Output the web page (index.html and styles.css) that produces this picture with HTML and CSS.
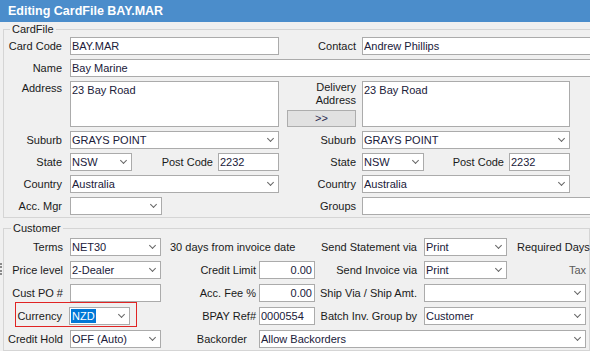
FILE: index.html
```html
<html>
    <head>
        <title>Editing CardFile BAY.MAR</title>
        <link rel="stylesheet" href="styles.css">
    </head>
    <body>
        <div class="titlebar">Editing CardFile BAY.MAR</div>

        <!-- card file details -->
        <fieldset class="group cardfile">
            <legend>CardFile</legend>
            <div class="card_grid">
                <label class="lbl">Card Code</label>
                <input class="box" type="text" value="BAY.MAR">
                <label class="lbl mid">Contact</label>
                <input class="box to_end" type="text" value="Andrew Phillips">

                <label class="lbl">Name</label>
                <input class="box wide" type="text" value="Bay Marine">

                <label class="lbl top">Address</label>
                <textarea class="box area">23 Bay Road</textarea>
                <div class="copy_cell">
                    <span class="two_line">Delivery<br>Address</span>
                    <button class="copy_btn">&gt;&gt;</button>
                </div>
                <textarea class="box area">23 Bay Road</textarea>
                <div></div>

                <label class="lbl">Suburb</label>
                <div class="combo"><span>GRAYS POINT</span></div>
                <label class="lbl mid">Suburb</label>
                <div class="combo"><span>GRAYS POINT</span></div>
                <div></div>

                <label class="lbl">State</label>
                <div class="pair">
                    <div class="combo state"><span>NSW</span></div>
                    <label class="pair_lbl">Post Code</label>
                    <input class="box post" type="text" value="2232">
                </div>
                <label class="lbl mid">State</label>
                <div class="pair">
                    <div class="combo state"><span>NSW</span></div>
                    <label class="pair_lbl">Post Code</label>
                    <input class="box post" type="text" value="2232">
                </div>
                <div></div>

                <label class="lbl">Country</label>
                <div class="combo"><span>Australia</span></div>
                <label class="lbl mid">Country</label>
                <div class="combo"><span>Australia</span></div>
                <div></div>

                <label class="lbl">Acc. Mgr</label>
                <div class="combo short"><span></span></div>
                <label class="lbl mid">Groups</label>
                <input class="box to_end" type="text" value="">
            </div>
        </fieldset>

        <!-- customer details -->
        <div class="customer_wrap">
            <div class="grip"></div>
            <fieldset class="group customer">
                <legend>Customer</legend>
                <div class="cust_grid">
                    <label class="lbl">Terms</label>
                    <div class="combo"><span>NET30</span></div>
                    <span class="note">30 days from invoice date</span>
                    <label class="lbl via">Send Statement via</label>
                    <div class="combo"><span>Print</span></div>
                    <span class="extra">Required Days</span>

                    <label class="lbl">Price level</label>
                    <div class="combo"><span>2-Dealer</span></div>
                    <label class="lbl money_lbl">Credit Limit</label>
                    <input class="box num" type="text" value="0.00">
                    <label class="lbl via">Send Invoice via</label>
                    <div class="combo"><span>Print</span></div>
                    <span class="extra tax">Tax</span>

                    <label class="lbl">Cust PO #</label>
                    <input class="box" type="text" value="">
                    <label class="lbl money_lbl">Acc. Fee %</label>
                    <input class="box num" type="text" value="0.00">
                    <label class="lbl via">Ship Via / Ship Amt.</label>
                    <div class="combo span_fg"><span></span></div>

                    <div class="currency_box">
                        <label class="cur_lbl">Currency</label>
                        <div class="combo cur"><span class="picked">NZD</span></div>
                    </div>
                    <label class="lbl money_lbl">BPAY Ref#</label>
                    <input class="box" type="text" value="0000554">
                    <label class="lbl via">Batch Inv. Group by</label>
                    <div class="combo span_fg"><span>Customer</span></div>

                    <label class="lbl">Credit Hold</label>
                    <div class="combo"><span>OFF (Auto)</span></div>
                    <label class="lbl back_lbl">Backorder</label>
                    <div class="combo span_dg"><span>Allow Backorders</span></div>
                </div>
            </fieldset>
        </div>
    </body>
</html>
```

FILE: styles.css
```css
body{
    margin: 0;
    width: 590px;
    height: 351px;
    overflow: hidden;
    background: #f0f0f0;
    color: #1a1a1a;
    font-family: "Liberation Sans", Arial, sans-serif;
    font-size: 11px;
}
.titlebar{
    height: 22px;
    line-height: 22px;
    padding-left: 8px;
    background: #4b8dcb;
    color: #fff;
    font-weight: bold;
    font-size: 12.5px;
}

/* group boxes */
.group{
    box-sizing: border-box;
    width: 620px;
    min-width: 0;
    margin: 1px 0 0 3px;
    padding: 1px 0 2px 0;
    border: 1px solid #d5d5d5;
}
.group legend{
    padding: 0 2px;
    margin-left: 6px;
    line-height: 13px;
}
.customer_wrap{
    display: flex;
    margin-top: 4px;
}
.grip{
    width: 0;
    height: 12px;
    margin-top: 41px;
    margin-right: 1px;
    border-left: 2px dotted #8a8a8a;
}
.customer{
    margin: 0;
    padding-top: 3px;
}
.customer legend{
    margin-left: 7px;
}

/* grids */
.card_grid{
    display: grid;
    grid-template-columns: 66px 209px 83px 208px 1fr;
    grid-template-rows: 18px 18px 46px 18px 18px 18px 18px;
    row-gap: 4px;
}
.cust_grid{
    display: grid;
    grid-template-columns: 66px 91px 98px 56px 109px 83px 79px;
    grid-auto-rows: 18px;
    row-gap: 5px;
}

/* labels */
.lbl{
    display: flex;
    align-items: center;
    justify-content: flex-end;
    padding-right: 8px;
    white-space: nowrap;
}
.lbl.top{
    align-items: flex-start;
    padding-top: 1px;
}
.lbl.mid{
    padding-right: 6px;
}
.cust_grid .lbl{
    padding-right: 7px;
}
.cust_grid .lbl.money_lbl{
    padding-right: 3px;
}
.cust_grid .lbl.back_lbl{
    padding-right: 12px;
}

/* fields */
.box{
    box-sizing: border-box;
    width: 100%;
    height: 18px;
    margin: 0;
    padding: 0 2px 0 1px;
    border: 1px solid #ababab;
    border-radius: 0;
    background: #fff;
    color: #20203a;
    font: inherit;
    outline: none;
}
.box.wide{
    grid-column: 2 / -1;
}
.box.to_end{
    grid-column: 4 / -1;
}
.box.area{
    height: 46px;
    padding-top: 2px;
    resize: none;
    overflow: hidden;
}
.box.num{
    text-align: right;
}
.combo{
    box-sizing: border-box;
    display: flex;
    align-items: center;
    height: 18px;
    padding-left: 1px;
    border: 1px solid #ababab;
    background: #fff;
    color: #20203a;
    white-space: nowrap;
}
.combo::after{
    content: "";
    width: 4px;
    height: 4px;
    margin: -3px 5px 0 auto;
    border-right: 1.5px solid #666;
    border-bottom: 1.5px solid #666;
    transform: rotate(45deg);
}
.combo.short{
    width: 92px;
}
.combo.span_fg{
    grid-column: 6 / 8;
}
.combo.span_dg{
    grid-column: 4 / 8;
}

/* state + post code pair */
.pair{
    display: flex;
}
.combo.state{
    width: 62px;
}
.pair_lbl{
    flex: 1;
    display: flex;
    align-items: center;
    justify-content: flex-end;
    padding-right: 5px;
}
.box.post{
    width: 61px;
}

/* delivery address copy */
.copy_cell{
    display: flex;
    flex-direction: column;
}
.two_line{
    text-align: right;
    padding-right: 6px;
    line-height: 13px;
}
.copy_btn{
    height: 17px;
    margin: auto 6px 0 8px;
    padding: 0;
    border: 1px solid #adadad;
    background: #e1e1e1;
    color: #2a2a50;
    font: inherit;
    line-height: 15px;
}

/* customer extras */
.note{
    grid-column: 3 / 5;
    display: flex;
    align-items: center;
    padding-left: 9px;
    white-space: nowrap;
}
.extra{
    display: flex;
    align-items: center;
    padding-left: 10px;
    white-space: nowrap;
}
.extra.tax{
    justify-content: flex-end;
    padding-left: 0;
    color: #5a5a5a;
}
.currency_box{
    grid-column: 1 / 3;
    align-self: start;
    display: flex;
    align-items: flex-start;
    box-sizing: border-box;
    width: 122px;
    height: 25px;
    margin: -5px 0 0 11px;
    padding-top: 4px;
    border: 1px solid #e02424;
}
.cur_lbl{
    box-sizing: border-box;
    width: 53px;
    height: 18px;
    line-height: 18px;
    padding-right: 7px;
    text-align: right;
}
.combo.cur{
    width: 61px;
}
.picked{
    background: #0078d7;
    color: #fff;
    padding: 1px 1px;
}
```
